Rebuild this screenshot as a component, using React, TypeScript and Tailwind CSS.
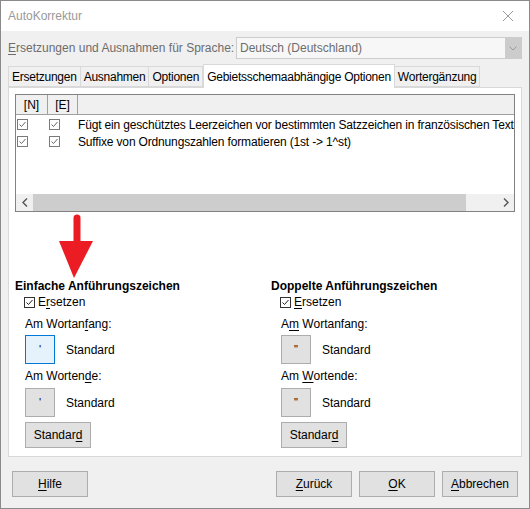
// @ts-nocheck
import type { ReactNode } from "react";

const u = (s: string) => <span className="underline underline-offset-2">{s}</span>;

function Check({ light = false }: { light?: boolean }) {
  return (
    <span className={`inline-flex shrink-0 w-[11px] h-[11px] border bg-white items-center justify-center ${light ? "border-[#7a7a7a]" : "border-[#333]"}`}>
      <svg width="9" height="9" viewBox="0 0 9 9">
        <path d="M1.5 4.5 L3.5 6.5 L7.5 2" fill="none" stroke={light ? "#666" : "#222"} strokeWidth="1" />
      </svg>
    </span>
  );
}

function Btn({ children, w = "w-[76px]" }: { children: ReactNode; w?: string }) {
  return (
    <div className={`${w} h-[26px] flex items-center justify-center bg-[#e1e1e1] border border-[#adadad] text-black`}>
      {children}
    </div>
  );
}

function QuoteBox({ ch, focus = false }: { ch: string; focus?: boolean }) {
  return (
    <div className={`w-[30px] h-[29px] flex items-start justify-center pt-[5px] text-[11px] border ${focus ? "bg-[#e5f1fb] border-[#0078d7]" : "bg-[#e1e1e1] border-[#adadad]"}`}>
      {ch}
    </div>
  );
}

function QuoteGroup({ title, rep, start, end, ch, focus }: any) {
  return (
    <div className="flex flex-col">
      <div className="font-bold h-[14px] leading-[14px]">{title}</div>
      <div className="flex items-center gap-[3px] pl-[9px] mt-[2px] h-[14px]">
        <Check />
        <span>{rep}</span>
      </div>
      <div className="pl-[10px] mt-[8px] h-[14px] leading-[14px]">{start}</div>
      <div className="pl-[10px] mt-[4px] flex items-center gap-[11px]">
        <QuoteBox ch={ch} focus={focus} />
        <span>Standard</span>
      </div>
      <div className="pl-[10px] mt-[5px] h-[14px] leading-[14px]">{end}</div>
      <div className="pl-[10px] mt-[5px] flex items-center gap-[11px]">
        <QuoteBox ch={ch} />
        <span>Standard</span>
      </div>
      <div className="pl-[10px] mt-[5px]">
        <Btn w="w-[66px]">Standar{u("d")}</Btn>
      </div>
    </div>
  );
}

export default function App() {
  const tabs = ["Ersetzungen", "Ausnahmen", "Optionen", "Gebietsschemaabhängige Optionen", "Wortergänzung"];
  return (
    <div className="w-[530px] h-[509px] border border-[#8a8a8a] bg-[#f0f0f0] flex flex-col text-[12px] text-black font-['Liberation_Sans',Arial,sans-serif] relative overflow-hidden">
      {/* title bar */}
      <div className="h-[30px] bg-white flex items-center justify-between pl-[7px] pr-[15px] text-[12px] text-[#999]">
        <span>AutoKorrektur</span>
        <svg width="12" height="12" viewBox="0 0 12 12">
          <path d="M1 1 L11 11 M11 1 L1 11" stroke="#999" strokeWidth="1" />
        </svg>
      </div>

      <div className="flex flex-col px-[7px]">
        {/* language row */}
        <div className="mt-[6px] h-[22px] flex items-center">
          <span className="w-[228px] text-[#6d6d6d]">{u("E")}rsetzungen und Ausnahmen für Sprache:</span>
          <div className="flex-1 h-[22px] border border-[#cccccc] bg-[#f7f7f7] flex items-center">
            <span className="flex-1 pl-[3px] text-[#6d6d6d]">Deutsch (Deutschland)</span>
            <div className="w-[16px] h-full bg-[#cccccc] flex items-center justify-center">
              <svg width="8" height="5" viewBox="0 0 8 5">
                <path d="M0.5 0.5 L4 4 L7.5 0.5" fill="none" stroke="#9a9a9a" strokeWidth="1" />
              </svg>
            </div>
          </div>
        </div>

        {/* tabs */}
        <div className="mt-[4px] flex items-end h-[24px] tracking-[-0.25px]">
          {tabs.map((t, i) =>
            i === 3 ? (
              <div key={t} className="h-[24px] px-[3px] bg-white border border-b-0 border-[#d9d9d9] flex items-center -mb-px z-10">
                {t}
              </div>
            ) : (
              <div key={t} className="h-[21px] px-[3px] bg-[#f0f0f0] border border-[#d9d9d9] -ml-px first:ml-0 flex items-center">
                {t}
              </div>
            )
          )}
        </div>

        {/* tab page */}
        <div className="h-[370px] bg-white border border-[#d9d9d9] px-[6px] pt-[6px] flex flex-col">
          <div className="h-[118px] border border-[#828282] flex flex-col overflow-hidden">
            <div className="h-[20px] flex border-b border-[#a0a0a0] bg-[#f0f0f0]">
              <div className="w-[32px] border-r border-[#a0a0a0] flex items-center justify-center">[N]</div>
              <div className="w-[30px] border-r border-[#a0a0a0] flex items-center justify-center">[E]</div>
              <div className="flex-1" />
            </div>
            <div className="flex-1 flex flex-col pt-[1px] tracking-[-0.16px]">
              {[
                "Fügt ein geschütztes Leerzeichen vor bestimmten Satzzeichen in französischen Text",
                "Suffixe von Ordnungszahlen formatieren (1st -> 1^st)",
              ].map((r) => (
                <div key={r} className="h-[17px] flex items-center whitespace-nowrap">
                  <div className="w-[32px] shrink-0 pl-[1px] flex"><Check light /></div>
                  <div className="w-[30px] shrink-0 pl-[1px] flex"><Check light /></div>
                  <span>{r}</span>
                </div>
              ))}
            </div>
            {/* horizontal scrollbar */}
            <div className="h-[17px] flex bg-[#f0f0f0]">
              <div className="w-[17px] flex items-center justify-center">
                <svg width="6" height="9" viewBox="0 0 6 9"><path d="M5 0.5 L1 4.5 L5 8.5" fill="none" stroke="#555" strokeWidth="1.4" /></svg>
              </div>
              <div className="w-[433px] bg-[#cdcdcd]" />
              <div className="flex-1" />
              <div className="w-[17px] flex items-center justify-center">
                <svg width="6" height="9" viewBox="0 0 6 9"><path d="M1 0.5 L5 4.5 L1 8.5" fill="none" stroke="#555" strokeWidth="1.4" /></svg>
              </div>
            </div>
          </div>

          <div className="mt-[67px] grid grid-cols-[256px_1fr]">
            <QuoteGroup title="Einfache Anführungszeichen" rep={<>E{u("r")}setzen</>} start={<>Am Wortan{u("f")}ang:</>} end={<>Am Worten{u("d")}e:</>} ch="'" focus />
            <QuoteGroup title="Doppelte Anführungszeichen" rep={<>{u("E")}rsetzen</>} start={<>A{u("m")} Wortanfang:</>} end={<>Am {u("W")}ortende:</>} ch={'"'} />
          </div>
        </div>

        {/* dialog buttons */}
        <div className="mt-[14px] flex items-center pl-[4px] pr-[4px]">
          <Btn>{u("H")}ilfe</Btn>
          <div className="flex-1" />
          <div className="flex gap-[7px]">
            <Btn>{u("Z")}urück</Btn>
            <Btn>{u("O")}K</Btn>
            <Btn>{u("A")}bbrechen</Btn>
          </div>
        </div>
      </div>

      {/* red pointer arrow */}
      <svg className="absolute left-[56px] top-[213px]" width="38" height="66" viewBox="0 0 38 66">
        <path d="M20 4 L20 28" stroke="#ec1c24" strokeWidth="7" strokeLinecap="round" />
        <path d="M2 27 L36 27 L17 64 Z" fill="#ec1c24" />
      </svg>
    </div>
  );
}
